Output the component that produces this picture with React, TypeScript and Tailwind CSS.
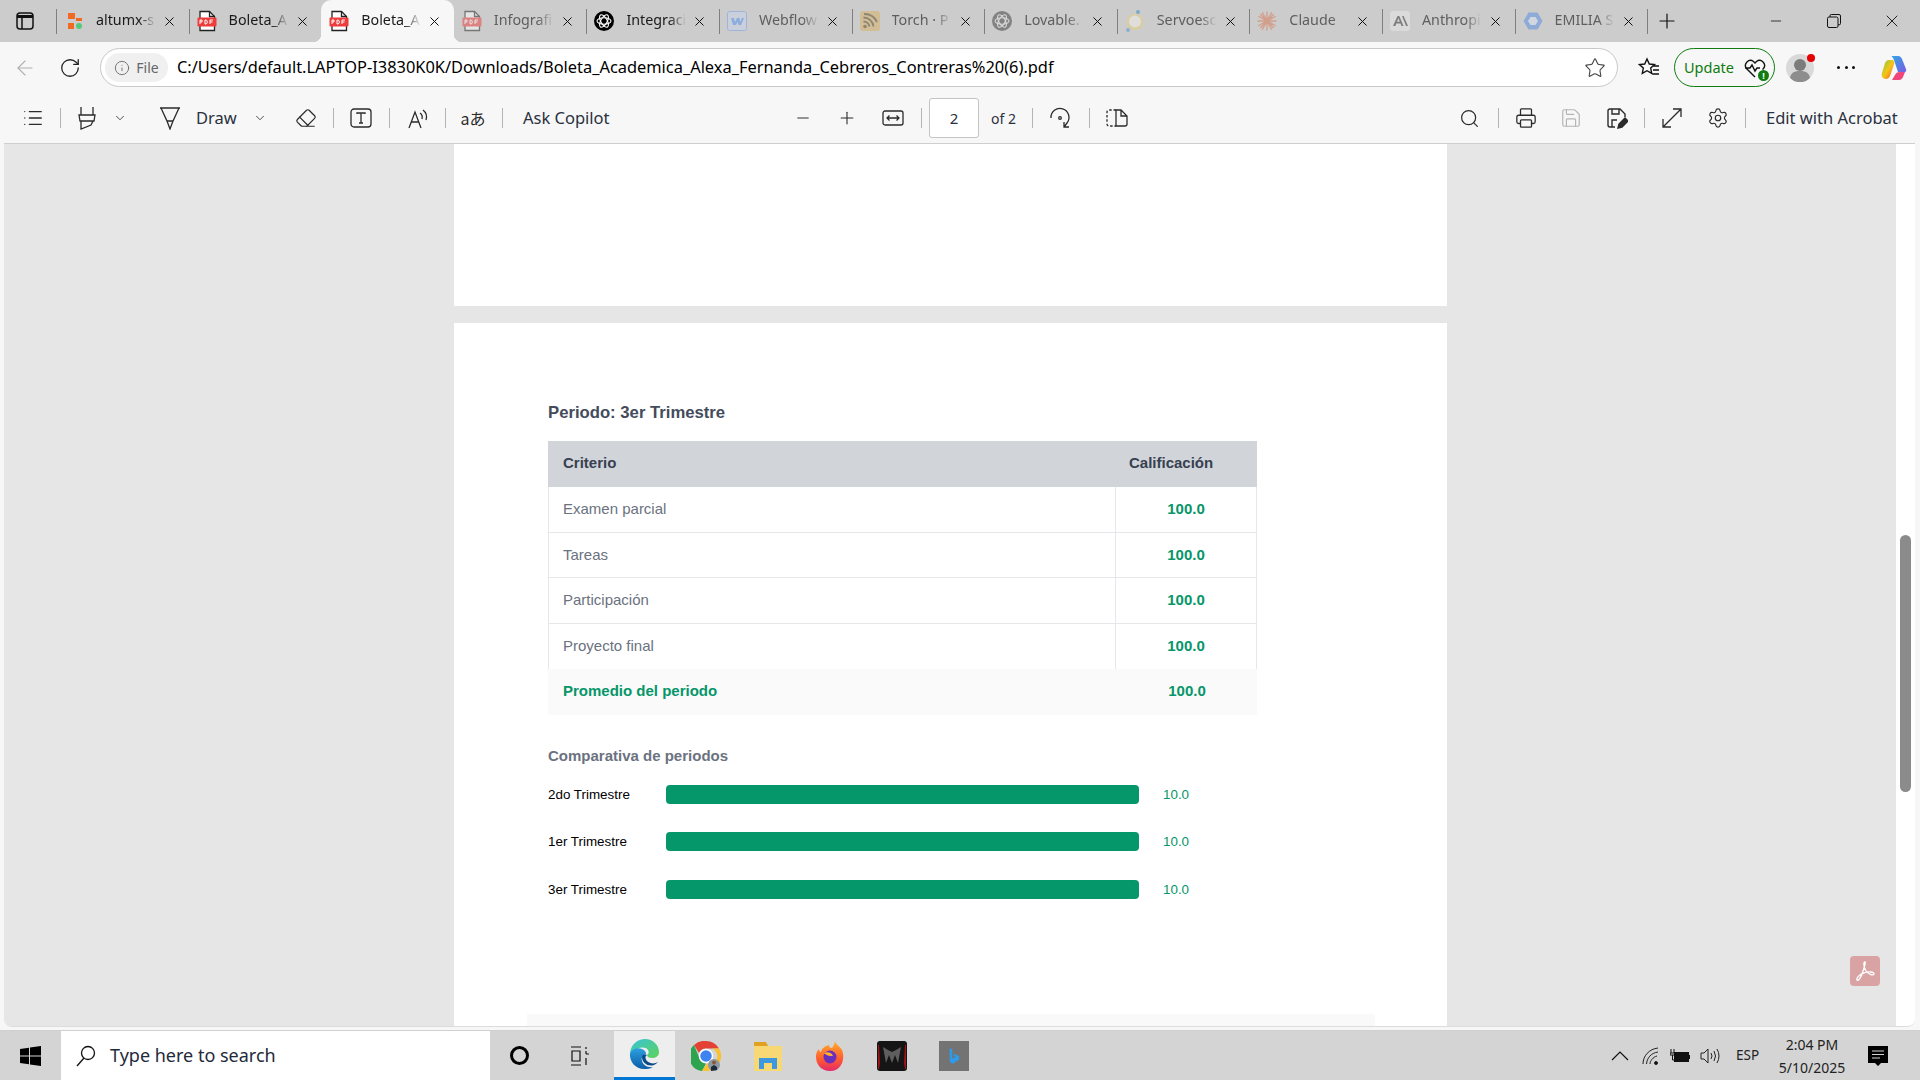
import React from "react";
import { ArrowLeft, ChevronDown, Eraser, Info, List, Minus, Plus, Printer, RotateCw, Save, Search, Settings, Star, X } from "lucide-react";

const Pdf = () => (
  <svg width="20" height="22" viewBox="0 0 20 22" fill="none">
    <path d="M3 20.5V1.5h9.5L17.5 6.5V20.5H3Z" fill="#fff" stroke="#222" strokeWidth="1.3" />
    <path d="M12.5 1.5V6.5H17.5" stroke="#222" strokeWidth="1.3" />
    <rect x="0.5" y="7.5" width="19" height="9" rx="1" fill="#ee3b3b" />
    <path d="M3 10v4M3 10h2v2H3M8 10v4h1.2l1-1v-2l-1-1H8M13 14v-4h3M13 12h2.5" stroke="#fff" strokeWidth="1" />
  </svg>
);
const Altumx = () => (
  <svg width="18" height="20" viewBox="0 0 18 20">
    <rect x="1" y="2" width="7" height="6" fill="#f26a21" />
    <rect x="9" y="7" width="6" height="3" fill="#f26a21" />
    <rect x="1" y="12" width="6" height="6" fill="#f26a21" />
    <circle cx="12" cy="15" r="3" fill="#58c878" />
  </svg>
);
const OpenAI = () => (
  <svg width="20" height="20" viewBox="0 0 20 20">
    <circle cx="10" cy="10" r="10" fill="#000" />
    <g fill="none" stroke="#fff" strokeWidth="1.1">
      <ellipse cx="10" cy="10" rx="7" ry="3.2" />
      <ellipse cx="10" cy="10" rx="7" ry="3.2" transform="rotate(60 10 10)" />
      <ellipse cx="10" cy="10" rx="7" ry="3.2" transform="rotate(120 10 10)" />
    </g>
  </svg>
);
const Webflow = () => (
  <svg width="20" height="20" viewBox="0 0 20 20">
    <rect x="0.5" y="0.5" width="19" height="19" rx="2" fill="#c9d5ea" stroke="#6fa0e8" />
    <path d="M4 7h3l1 4 2-4h2.5l.7 4L15 7h2l-3 7h-2.5l-.7-3-2 3H6Z" fill="#4f8ff0" />
  </svg>
);
const Torch = () => (
  <svg width="20" height="20" viewBox="0 0 20 20">
    <rect width="20" height="20" rx="3" fill="#d9b060" />
    <circle cx="5" cy="15.500" r="1.800" fill="#4f4020" />
    <path d="M3.500 10.500a6 6 0 0 1 6 5M3.500 6.500a10 10 0 0 1 10 9M4 3a14 14 0 0 1 13 8" stroke="#4f4020" strokeWidth="1.800" fill="none" />
  </svg>
);
const Lovable = () => (
  <svg width="20" height="20" viewBox="0 0 20 20">
    <circle cx="10" cy="10" r="10" fill="#3a3a3a" />
    <g fill="none" stroke="#e5e5e5" strokeWidth="1.1">
      <ellipse cx="10" cy="10" rx="7" ry="3.2" />
      <ellipse cx="10" cy="10" rx="7" ry="3.2" transform="rotate(60 10 10)" />
      <ellipse cx="10" cy="10" rx="7" ry="3.2" transform="rotate(120 10 10)" />
    </g>
  </svg>
);
const Servo = () => (
  <svg width="20" height="24" viewBox="0 0 20 24">
    <circle cx="10" cy="13" r="8" fill="#e8cf6a" />
    <circle cx="10" cy="12.500" r="6" fill="#f3f1ea" />
    <circle cx="13" cy="3" r="2" fill="#2f86c8" />
    <circle cx="3" cy="21" r="2" fill="#4a96d0" />
  </svg>
);
const Claude = () => (
  <svg width="20" height="20" viewBox="0 0 20 20" stroke="#d9744e" strokeWidth="1.400" strokeLinecap="round">
    <path d="M10 1v18M1 10h18M3.600 3.600l12.800 12.800M16.400 3.600 3.600 16.400M5.500 1.800l9 16.400M14.500 1.800l-9 16.400M1.800 5.500l16.400 9M18.200 5.500l-16.400 9" />
  </svg>
);
const Anthropic = () => (
  <svg width="20" height="20" viewBox="0 0 20 20">
    <rect width="20" height="20" rx="3" fill="#e8e8e8" />
    <path d="M3 15 7.500 5h1.800L13.500 15h-2l-1-2.500H6.300L5.300 15Zm4-4.200h2.800L8.400 7.300ZM12 5h1.600L18 15h-2Z" fill="#333" />
  </svg>
);
const Emilia = () => (
  <svg width="20" height="20" viewBox="0 0 20 20">
    <path d="M5.500 1.500h9L19.500 10l-5 8.500h-9L.5 10Z" fill="#4f8be0" />
    <path d="M7.500 6h5L15 10l-2.500 4h-5L5 10Z" fill="#d6e3f5" />
  </svg>
);

const std = "ml-[8px] mr-[12px]";
const tabs = [
  { t: "altumx-s", i: <Altumx />, dim: false, x: "ml-[10px] mr-[10px]" },
  { t: "Boleta_A", i: <Pdf />, dim: false, x: std },
  { t: "Boleta_A", i: <Pdf />, dim: false, active: true, x: std },
  { t: "Infografi", i: <Pdf />, dim: true, x: std },
  { t: "Integraci", i: <OpenAI />, dim: false, x: std },
  { t: "Webflow", i: <Webflow />, dim: true, x: std },
  { t: "Torch · P", i: <Torch />, dim: true, x: std },
  { t: "Lovable.", i: <Lovable />, dim: true, x: std },
  { t: "Servoesc", i: <Servo />, dim: true, x: std },
  { t: "Claude", i: <Claude />, dim: true, x: std },
  { t: "Anthropi", i: <Anthropic />, dim: true, x: std },
  { t: "EMILIA S", i: <Emilia />, dim: true, x: std },
];

function Tab({ t, i, dim, active, x, line }: any) {
  return (
    <div className={`relative flex h-[42px] w-[132.6px] shrink-0 items-center ${active ? "rounded-t-[10px] bg-[#f7f7f7]" : ""}`}>
      {line && <div className="absolute left-0 top-[9px] h-[25px] w-px bg-[#7f7f7f]" />}
      {active && <div className="absolute -left-[8px] bottom-0 size-[8px] bg-[radial-gradient(circle_at_0_0,#cccccc_8px,#f7f7f7_8.5px)]" />}
      {active && <div className="absolute -right-[8px] bottom-0 size-[8px] bg-[radial-gradient(circle_at_100%_0,#cccccc_8px,#f7f7f7_8.5px)]" />}
      <div className={`flex w-[20px] shrink-0 justify-center ${x} ${dim ? "opacity-50" : ""}`}>{i}</div>
      <div className={`w-[60px] shrink-0 whitespace-nowrap pb-[2px] text-[14.300px] [mask-image:linear-gradient(to_right,black_72%,transparent_100%)] ${dim ? "text-[#5e5e5e]" : "text-[#1a1a1a]"}`}>{t}</div>
      <X size={15} strokeWidth={1.6} className="ml-[6px] shrink-0 text-[#111]" />
    </div>
  );
}

const Sep = ({ c }: { c: string }) => <div className={`h-[20px] w-px shrink-0 bg-[#b4b4b4] ${c}`} />;
const Cell = ({ c, children }: { c: string; children: React.ReactNode }) => <div className={`flex shrink-0 items-center justify-center ${c}`}>{children}</div>;
const ink = "#2b2b2b";

function Toolbar() {
  return (
    <div className="flex h-[51px] shrink-0 items-center border-b border-[#cfcfcf] bg-[#f7f7f7] pl-[10px] text-[16.500px] text-[#2a3140]">
      <Cell c="w-[38px]"><List size={22} strokeWidth={1.4} color={ink} /></Cell>
      <Sep c="ml-[8px]" />
      <Cell c="ml-[11px] w-[30px]">
        <svg width="20" height="24" viewBox="0 0 20 24" fill="none" stroke={ink} strokeWidth="1.300"><path d="M4 1v8M16 1v8M2 9h16l-1 6H3ZM4 15v8l10-4 2-4" /></svg>
      </Cell>
      <Cell c="ml-[10px] w-[16px]"><ChevronDown size={14} strokeWidth={1.4} color={ink} /></Cell>
      <Cell c="ml-[29px] w-[26px]">
        <svg width="22" height="24" viewBox="0 0 22 24" fill="none" stroke={ink} strokeWidth="1.300"><path d="M1 2h20M2 2l6 13h6l6-13M8 15l3 8 3-8" /></svg>
      </Cell>
      <div className="ml-[13px] w-[40px] shrink-0 whitespace-nowrap">Draw</div>
      <Cell c="ml-[16px] w-[16px]"><ChevronDown size={14} strokeWidth={1.4} color={ink} /></Cell>
      <Cell c="ml-[26px] w-[24px]"><Eraser size={22} strokeWidth={1.3} color={ink} /></Cell>
      <Sep c="ml-[15px]" />
      <Cell c="ml-[15px] w-[24px]">
        <svg width="22" height="22" viewBox="0 0 22 22" fill="none" stroke={ink} strokeWidth="1.300"><rect x="1" y="2" width="20" height="18" rx="3" /><path d="M7 7V6h8v1M11 6v10M9 16h4" /></svg>
      </Cell>
      <Sep c="ml-[16px]" />
      <Cell c="ml-[16px] w-[24px]">
        <svg width="22" height="22" viewBox="0 0 22 22" fill="none" stroke={ink} strokeWidth="1.300"><path d="M2 21 8 5l6 16M4.500 15h7M13 6q3 2 2 6M16 3q5 4 3 10" /></svg>
      </Cell>
      <Sep c="ml-[15px]" />
      <div className="ml-[13px] flex w-[28px] shrink-0 justify-center whitespace-nowrap font-['Noto_Sans_CJK_JP',sans-serif] text-[16px] leading-none text-[#2b2b2b]">aあ</div>
      <Sep c="ml-[15px]" />
      <div className="ml-[20px] w-[88px] shrink-0 whitespace-nowrap">Ask Copilot</div>
      <Cell c="ml-[182px] w-[20px]"><Minus size={18} strokeWidth={1.3} color={ink} /></Cell>
      <Cell c="ml-[24px] w-[20px]"><Plus size={20} strokeWidth={1.3} color={ink} /></Cell>
      <Cell c="ml-[25px] w-[22px]">
        <svg width="22" height="18" viewBox="0 0 22 18" fill="none" stroke={ink} strokeWidth="1.300"><rect x="1" y="2" width="20" height="14" rx="2" /><path d="M5 9h12M7.500 6.500 5 9l2.500 2.500M14.500 6.500 17 9l-2.500 2.500" /></svg>
      </Cell>
      <Sep c="ml-[17px]" />
      <div className="ml-[7px] flex h-[40px] w-[50px] shrink-0 items-center justify-center rounded-[3px] border border-[#c4c4c4] bg-white text-[15px]">2</div>
      <div className="ml-[12px] w-[26px] shrink-0 whitespace-nowrap text-[14px]">of 2</div>
      <Sep c="ml-[15px]" />
      <Cell c="ml-[15px] w-[24px]">
        <svg width="22" height="24" viewBox="0 0 22 24" fill="none" stroke={ink} strokeWidth="1.300"><path d="M2 12a9 9 0 1 1 16 5l-3 4M15 16v5h5" /><circle cx="11" cy="12" r="1.300" /></svg>
      </Cell>
      <Sep c="ml-[17px]" />
      <Cell c="ml-[15px] w-[24px]">
        <svg width="22" height="20" viewBox="0 0 22 20" fill="none" stroke={ink} strokeWidth="1.300"><path d="M10 2H3a2 2 0 0 0-2 2v12a2 2 0 0 0 2 2h7" strokeDasharray="2.500 1.800" /><path d="M10 2h5l6 6v8a2 2 0 0 1-2 2h-9ZM15 2v6h6" /></svg>
      </Cell>
      <Cell c="ml-[328px] w-[24px]"><Search size={21} strokeWidth={1.4} color={ink} /></Cell>
      <Sep c="ml-[17px]" />
      <Cell c="ml-[15px] w-[24px]"><Printer size={22} strokeWidth={1.4} color={ink} /></Cell>
      <Cell c="ml-[21px] w-[24px]"><Save size={22} strokeWidth={1.3} color="#b5b5b5" /></Cell>
      <Cell c="ml-[22px] w-[24px]">
        <svg width="22" height="22" viewBox="0 0 22 22" fill="none" stroke={ink} strokeWidth="1.400"><path d="M9 20H4a2 2 0 0 1-2-2V4a2 2 0 0 1 2-2h10l5 5v3M6 2v5h7V2M6 20v-7h5" /><path d="M12 21l1-4 6-6 3 3-6 6Z" fill={ink} /></svg>
      </Cell>
      <Sep c="ml-[15px]" />
      <Cell c="ml-[15px] w-[24px]">
        <svg width="22" height="22" viewBox="0 0 22 22" fill="none" stroke={ink} strokeWidth="1.300"><path d="M2 20 20 2M12 2h8v8M2 12v8h8" /></svg>
      </Cell>
      <Cell c="ml-[22px] w-[24px]"><Settings size={22} strokeWidth={1.3} color={ink} /></Cell>
      <Sep c="ml-[15px]" />
      <div className="ml-[20px] whitespace-nowrap">Edit with Acrobat</div>
    </div>
  );
}

const rows = ["Examen parcial", "Tareas", "Participación", "Proyecto final"];
const bars = [
  { b: "2do Trimestre", c: "mt-[19px]" },
  { b: "1er Trimestre", c: "mt-[28px]" },
  { b: "3er Trimestre", c: "mt-[29px]" },
];

function Page() {
  return (
    <div className="mt-[17px] flex h-[704px] w-[993px] shrink-0 flex-col bg-white pl-[94px] pt-[80px] font-['Liberation_Sans',sans-serif]">
      <div className="h-[20px] whitespace-nowrap text-[16.700px] font-bold leading-[20px] text-[#434c5c]">Periodo: 3er Trimestre</div>
      <div className="mt-[18px] w-[709px]">
        <div className="flex h-[46px] items-center justify-between bg-[#d1d5d9] pb-[1px] pl-[15px] text-[15px] font-bold text-[#374151]">
          <span>Criterio</span>
          <span className="w-[128px]">Calificación</span>
        </div>
        {rows.map((r, n) => (
          <div key={r} className={`flex h-[45.600px] border-x border-[#e5e7eb] text-[15px] ${n < 3 ? "border-b" : ""}`}>
            <div className="flex flex-1 items-center border-r border-[#e5e7eb] pl-[14px] text-[#6b7280]">{r}</div>
            <div className="flex w-[140px] items-center justify-center font-bold text-[#059669]">100.0</div>
          </div>
        ))}
        <div className="flex h-[46px] items-center bg-[#fafafa] pb-[2px] text-[15px] font-bold text-[#059669]">
          <div className="flex-1 pl-[15px]">Promedio del periodo</div>
          <div className="w-[140px] text-center">100.0</div>
        </div>
      </div>
      <div className="mt-[31px] h-[20px] text-[15px] font-bold leading-[20px] text-[#6b7280]">Comparativa de periodos</div>
      <div className="flex w-[700px] flex-col">
        {bars.map(({ b, c }) => (
          <div key={b} className={`flex h-[19px] items-center text-[13.400px] ${c}`}>
            <div className="w-[118px] whitespace-nowrap pt-[1px] text-black">{b}</div>
            <div className="h-[19px] w-[473px] rounded-[4px] bg-[#059669]" />
            <div className="ml-[24px] pt-[1px] text-[#059669]">10.0</div>
          </div>
        ))}
      </div>
      <div className="-ml-[21px] mt-auto h-[13px] w-[848px] bg-[#f9f9f9]" />
    </div>
  );
}

function TaskIcons() {
  return (
    <>
      <div className="ml-[24px] flex h-full w-[61px] items-center justify-center border-b-[3px] border-[#0078d4] bg-[#eeeeee] pr-[1px]">
        <svg width="30" height="30" viewBox="0 0 30 30">
          <defs>
            <linearGradient id="eg" x1="0" y1="0" x2="1" y2="1"><stop offset="0" stopColor="#36c3d9" /><stop offset="1" stopColor="#5ed35a" /></linearGradient>
            <linearGradient id="eb" x1="0" y1="0" x2="0" y2="1"><stop offset="0" stopColor="#2c9fe0" /><stop offset="1" stopColor="#0c5ea8" /></linearGradient>
          </defs>
          <path d="M1 14C2 5 9 0 16 0c8 0 14 6 14 13 0 4-3 6-7 6-3 0-5-1-5-3 2-1 2-3 1-5-2-3-7-3-11-1-4 1-6 3-7 4Z" fill="url(#eg)" />
          <path d="M1 14c2-4 8-6 12-4 3 1 4 3 4 5-3 1-5 3-4 7 1 4 6 7 11 6-3 2-6 2-9 2C7 30 0 23 1 14Z" fill="url(#eb)" />
          <path d="M13 18c0 6 6 10 12 8 2-1 3-2 4-3-3 2-8 2-11-1-2-2-2-5 0-6-3-1-5 0-5 2Z" fill="#0a4a8a" />
        </svg>
      </div>
      <div className="ml-[16px] flex w-[30px] justify-center">
        <svg width="30" height="30" viewBox="0 0 30 30">
          <path d="M15 0a15 15 0 0 1 13 7.500H15a7.500 7.500 0 0 0-7 4.500L3 4A15 15 0 0 1 15 0Z" fill="#e34133" />
          <path d="M3 4l5.500 13A7.500 7.500 0 0 0 15 22.500L11 30A15 15 0 0 1 3 4Z" fill="#2fa44f" />
          <path d="M28 7.500A15 15 0 0 1 15 30h-4l5-7.500a7.500 7.500 0 0 0 5-15Z" fill="#fbc02d" />
          <circle cx="15" cy="15" r="6.500" fill="#3f83f0" stroke="#fff" strokeWidth="1.500" />
          <circle cx="23" cy="24" r="6" fill="#8e9aa3" />
          <path d="M20 30v-4l3-2 3 2v3Z" fill="#1f2b3a" />
          <circle cx="23" cy="21.500" r="2" fill="#8a5a3c" />
        </svg>
      </div>
      <div className="ml-[33px] flex w-[28px] justify-center">
        <svg width="28" height="30" viewBox="0 0 28 30">
          <path d="M0 1h12l2 4H0Z" fill="#e0a020" />
          <rect y="5" width="28" height="25" fill="#f8d775" />
          <path d="M5 17h18v11h-5v-6h-8v6H5Z" fill="#3f97dd" />
        </svg>
      </div>
      <div className="ml-[34px] flex w-[28px] justify-center">
        <svg width="28" height="30" viewBox="0 0 28 30">
          <defs><linearGradient id="ff" x1="0" y1="0" x2="0" y2="1"><stop offset="0" stopColor="#ffb02e" /><stop offset="0.6" stopColor="#ff5c2e" /><stop offset="1" stopColor="#e3296b" /></linearGradient></defs>
          <path d="M19 0c1 4 5 5 7 9 3 7 1 21-12 21C5 30 0 23 0 16c0-4 1-6 3-8 0 2 1 3 2 3 1-4 4-6 8-7 0 2 1 3 3 3 1-2 3-4 3-7Z" fill="url(#ff)" />
          <circle cx="14" cy="16" r="6.500" fill="#6a2ebd" />
          <path d="M8 12c4-2 8 0 9 3-3 0-6 0-9-3Z" fill="#ffb02e" />
        </svg>
      </div>
      <div className="ml-[33px] flex w-[30px] justify-center">
        <svg width="30" height="30" viewBox="0 0 30 30">
          <rect width="30" height="30" rx="3" fill="#151515" />
          <path d="M1 4h1l1 18-1 6H1ZM29 4h-1l-1 18 1 6h1Z" fill="#a01515" />
          <path d="M6 6l5 3 4 2 4-2 5-3-3 16-3-8-3 8-3-8-3 8Z" fill="#5e5e5e" />
        </svg>
      </div>
      <div className="ml-[32px] flex h-[30px] w-[30px] items-center justify-center bg-[#737373]">
        <svg width="12" height="18" viewBox="0 0 14 20"><path d="M2 1l3 1v11l4-2-2-1-1-3 7 3v4l-7 5-4-2Z" fill="#2f9be8" /></svg>
      </div>
    </>
  );
}

export default function App() {
  return (
    <div className="flex h-[1080px] w-[1920px] flex-col overflow-hidden bg-[#f7f7f7] font-['Noto_Sans',sans-serif]">
      <div className="flex h-[42px] shrink-0 items-center bg-[#cccccc]">
        <div className="flex w-[56px] shrink-0 pl-[16px]">
          <svg width="18" height="18" viewBox="0 0 18 18" fill="none" stroke="#111" strokeWidth="1.500"><rect x="1" y="1" width="16" height="16" rx="3" /><path d="M1 4.500h16" strokeWidth="3" /><path d="M6 5v12" /></svg>
        </div>
        {tabs.map((t, n) => (
          <Tab key={n} {...t} line={n !== 2 && n !== 3} />
        ))}
        <div className="h-[25px] w-px shrink-0 bg-[#7f7f7f]" />
        <Plus size={24} strokeWidth={1.2} className="ml-[7px] shrink-0 text-[#111]" />
        <Minus size={16} strokeWidth={1.2} className="ml-[89px] shrink-0 text-[#111]" />
        <svg width="14" height="14" viewBox="0 0 14 14" fill="none" stroke="#111" className="ml-[43px] shrink-0"><rect x="0.500" y="3" width="10.500" height="10.500" rx="1.500" /><path d="M3 3V1.800A1.300 1.300 0 0 1 4.300.500h7.700a1.500 1.500 0 0 1 1.500 1.500v7.500a1.300 1.300 0 0 1-1.300 1.300H11" /></svg>
        <X size={20} strokeWidth={1.1} className="ml-[41px] shrink-0 text-[#111]" />
      </div>

      <div className="flex h-[51px] shrink-0 items-center pl-[13px]">
        <ArrowLeft size={24} strokeWidth={1.1} className="shrink-0 text-[#b0b0b0]" />
        <RotateCw size={22} strokeWidth={1.4} className="ml-[22px] shrink-0 text-[#222]" />
        <div className="ml-[19px] flex h-[39px] w-[1518px] shrink-0 items-center rounded-full border border-[#c8c8c8] bg-white pl-[4px]">
          <div className="flex h-[29px] w-[63px] shrink-0 items-center justify-center gap-[6px] rounded-full bg-[#f0f0f0] text-[14px] text-[#666]">
            <Info size={16} strokeWidth={1.3} />File
          </div>
          <div className="ml-[9px] whitespace-nowrap text-[16.400px] text-black">C:/Users/default.LAPTOP-I3830K0K/Downloads/Boleta_Academica_Alexa_Fernanda_Cebreros_Contreras%20(6).pdf</div>
          <Star size={22} strokeWidth={1.2} className="ml-auto mr-[11px] shrink-0 text-[#444]" />
        </div>
        <svg width="22" height="22" viewBox="0 0 22 22" fill="none" stroke="#111" strokeWidth="1.400" className="ml-[20px] shrink-0"><path d="M9 2l2.300 5 5.200.6-3.800 3.500 1 5.200L9 13.700l-4.700 2.600 1-5.200L1.500 7.600 6.700 7ZM15 9h6M15 13h6M14 17h7" /></svg>
        <div className="ml-[14px] flex h-[39px] w-[101px] shrink-0 items-center rounded-full border border-[#107c10] pl-[9px] text-[14.500px] text-[#107c10]">
          Update
          <div className="relative ml-[10px]">
            <svg width="22" height="20" viewBox="0 0 22 20" fill="none" stroke="#111" strokeWidth="1.400"><path d="M11 19 2.500 10.500a5 5 0 0 1 7-7L11 5l1.500-1.500a5 5 0 0 1 7 7l-1 1M1 10h5l2-3 3 6 2-3h3" /></svg>
            <div className="absolute -bottom-[3px] -right-[3px] flex size-[11px] items-center justify-center rounded-full bg-[#107c10] text-[9px] font-bold leading-none text-white">!</div>
          </div>
        </div>
        <div className="relative ml-[11px] flex size-[28px] shrink-0 items-end justify-center overflow-visible rounded-full bg-[#d9d9d9]">
          <svg width="28" height="28" viewBox="0 0 28 28"><circle cx="14" cy="11" r="6" fill="#7c7c7c" /><path d="M4 24c1-6 5-7 10-7s9 1 10 7a14 14 0 0 1-20 0Z" fill="#8d8d8d" /></svg>
          <div className="absolute -right-[1px] top-0 size-[8px] rounded-full bg-[#e60000]" />
        </div>
        <div className="ml-[23px] flex w-[18px] shrink-0 justify-between">
          <div className="size-[3px] rounded-full bg-[#111]" /><div className="size-[3px] rounded-full bg-[#111]" /><div className="size-[3px] rounded-full bg-[#111]" />
        </div>
        <svg width="28" height="28" viewBox="0 0 28 28" className="ml-[25px] shrink-0">
          <defs>
            <linearGradient id="c1" x1="0" y1="0" x2="1" y2="1"><stop offset="0" stopColor="#2ea8e8" /><stop offset="1" stopColor="#7a5be0" /></linearGradient>
            <linearGradient id="c2" x1="0" y1="0" x2="1" y2="1"><stop offset="0" stopColor="#7ac943" /><stop offset="0.5" stopColor="#f5c518" /><stop offset="1" stopColor="#f0552b" /></linearGradient>
          </defs>
          <path d="M11 2h7c2 0 3 1 4 3l4 10c1 2-1 4-3 3h-5L14 6c-1-2-2-4-3-4Z" fill="url(#c1)" />
          <path d="M9 6h3c2 0 3 2 2 4l-4 12c-1 2-2 3-4 3-3 0-5-3-4-6l3-10c1-2 2-3 4-3Z" fill="url(#c2)" />
          <path d="M12 26h7c2 0 3-1 4-3l2-5-5 0c-3 0-4 1-5 3Z" fill="#f0447a" />
        </svg>
      </div>

      <div className="ml-[4px] flex h-[934px] w-[1911px] shrink-0 flex-col overflow-hidden rounded-[8px] border-b border-[#dcdcdc]">
        <Toolbar />
        <div className="flex min-h-0 flex-1">
          <div className="relative flex w-[1892px] shrink-0 flex-col items-center overflow-hidden bg-[#e6e6e6] pl-[1px]">
            <div className="h-[162px] w-[993px] shrink-0 bg-white" />
            <Page />
            <div className="absolute bottom-[40px] right-[16px] flex size-[30px] items-center justify-center rounded-[4px] bg-[#d9a3a3]">
              <svg width="22" height="22" viewBox="0 0 22 22" fill="none" stroke="#fff" strokeWidth="1.300"><path d="M11 2c-2 0-1 6 1 9 2 3 7 5 8 3s-6-3-10-1c-4 1-8 5-7 7s5-4 6-9c1-3 3-9 2-9Z" /></svg>
            </div>
          </div>
          <div className="flex flex-1 justify-center bg-white pt-[391px]">
            <div className="h-[257px] w-[11px] rounded-full bg-[#8b8b8b]" />
          </div>
        </div>
      </div>

      <div className="mt-auto flex h-[50px] shrink-0 items-center border-t border-[#d0d0d0] bg-[#d4d4d4]">
        <svg width="21" height="20" viewBox="0 0 21 20" fill="#000" className="ml-[20px] shrink-0"><path d="M0 3l9-1.300V9.500H0ZM10 1.500 21 0v9.500H10ZM0 10.500h9v7.800L0 17ZM10 10.500h11V20l-11-1.500Z" /></svg>
        <div className="ml-[20px] flex h-[49px] w-[429px] shrink-0 items-center bg-white pl-[15px] text-[18px] text-[#1f2a3a]">
          <svg width="20" height="22" viewBox="0 0 20 22" fill="none" stroke="#111" strokeWidth="1.300" className="shrink-0"><circle cx="12" cy="8" r="6.500" /><path d="M8 13 1 21" /></svg>
          <span className="ml-[14px] whitespace-nowrap">Type here to search</span>
        </div>
        <div className="ml-[20px] size-[19px] shrink-0 rounded-full border-[3px] border-black" />
        <svg width="20" height="20" viewBox="0 0 20 20" fill="none" stroke="#111" strokeWidth="1.200" className="ml-[41px] shrink-0"><path d="M1 1h10M1 19h10M2 5h8v10H2ZM16 1v2M16 8h3M16 5v3M16 12v7" /></svg>
        <TaskIcons />
        <svg width="18" height="10" viewBox="0 0 18 10" fill="none" stroke="#111" strokeWidth="1.200" className="ml-[642px] shrink-0"><path d="M1 9l8-8 8 8" /></svg>
        <svg width="18" height="18" viewBox="0 0 18 18" fill="none" stroke="#222" strokeWidth="1" className="ml-[13px] shrink-0"><path d="M1 17C1 9 7 2 16 1M4.500 17C5 11 9 6 16 5M8 17c0-3 3-7 7-8" /><circle cx="14" cy="16" r="1.500" fill="#111" /></svg>
        <svg width="20" height="16" viewBox="0 0 20 16" className="ml-[10px] shrink-0"><rect x="4" y="4" width="15" height="10" fill="#111" /><rect x="19" y="7" width="1" height="4" fill="#111" /><path d="M1 1v4M4 1v4M0 5h5v2H0ZM2.500 7v5h2" stroke="#111" fill="none" /></svg>
        <svg width="20" height="16" viewBox="0 0 20 16" fill="none" stroke="#222" strokeWidth="1" className="ml-[10px] shrink-0"><path d="M1 5h3l4-4v14l-4-4H1ZM11 5q2 3 0 6M14 3q3 5 0 10M17 1q4 7 0 14" /></svg>
        <div className="ml-[16px] w-[24px] shrink-0 text-[13.500px] text-[#222]">ESP</div>
        <div className="ml-[17px] flex w-[70px] shrink-0 flex-col items-center text-[14px] leading-[23px] text-[#222]">
          <span>2:04 PM</span>
          <span>5/10/2025</span>
        </div>
        <svg width="20" height="20" viewBox="0 0 20 20" className="ml-[21px] shrink-0"><path d="M0 0h20v17h-7l-3 3-3-3H0Z" fill="#000" /><path d="M4 5h12M4 8.500h12M4 12h8" stroke="#d4d4d4" /></svg>
      </div>
    </div>
  );
}
